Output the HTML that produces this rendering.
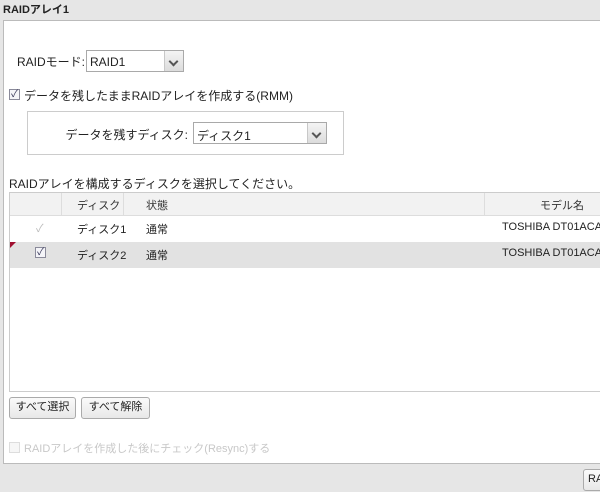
<!DOCTYPE html><html><head><meta charset="utf-8"><style>
body{margin:0;width:600px;height:492px;background:#e6e6e6;font-family:"Liberation Sans","Noto Sans CJK JP",sans-serif;font-size:11px;color:#222;position:relative;overflow:hidden}
.a{position:absolute;white-space:nowrap}
.sel{position:absolute;background:#fff;border:1px solid #a9a9a9;box-sizing:border-box}
.sel .ar{position:absolute;right:0;top:0;bottom:0;width:18px;background:linear-gradient(#f4f4f4,#dcdcdc);border-left:1px solid #c8c8c8}
.sel .ar:after{content:"";position:absolute;left:5px;top:7px;width:5px;height:5px;border-right:2px solid #555;border-bottom:2px solid #555;transform:rotate(45deg)}
.cb{position:absolute;width:11px;height:11px;border:1px solid #8a8a9a;background:#f4f4f8;box-sizing:border-box;font-size:10px;line-height:9px;text-align:center;color:#335}
.btn{position:absolute;border:1px solid #aaa;border-radius:3px;background:linear-gradient(#fafafa,#e8e8e8);box-sizing:border-box;text-align:center;line-height:19px}
</style></head><body>
<div class="a" style="left:3px;top:1px;font-weight:bold;font-size:11px">RAIDアレイ1</div>
<div class="a" style="left:3px;top:20px;width:620px;height:444px;background:#fff;border:1px solid #bbb;box-sizing:border-box"></div>
<div class="a" style="left:17px;top:53px;font-size:12px">RAIDモード:</div>
<div class="sel" style="left:86px;top:50px;width:98px;height:22px"><span class="a" style="left:3px;top:4px;font-size:12px">RAID1</span><div class="ar"></div></div>
<div class="cb" style="left:9px;top:89px">✓</div>
<div class="a" style="left:24px;top:87px;font-size:12px">データを残したままRAIDアレイを作成する(RMM)</div>
<div class="a" style="left:27px;top:111px;width:317px;height:44px;border:1px solid #ccc;box-sizing:border-box"></div>
<div class="a" style="right:412px;top:126px;font-size:12px">データを残すディスク:</div>
<div class="sel" style="left:193px;top:122px;width:134px;height:22px"><span class="a" style="left:3px;top:4px;font-size:12px">ディスク1</span><div class="ar"></div></div>
<div class="a" style="left:9px;top:175px;font-size:12px">RAIDアレイを構成するディスクを選択してください。</div>
<div class="a" style="left:9px;top:192px;width:600px;height:200px;border:1px solid #ccc;box-sizing:border-box"></div>
<div class="a" style="left:10px;top:193px;width:600px;height:22px;background:#f2f2f2;border-bottom:1px solid #ddd"></div>
<div class="a" style="left:61px;top:193px;width:1px;height:22px;background:#ddd"></div>
<div class="a" style="left:123px;top:193px;width:1px;height:22px;background:#ddd"></div>
<div class="a" style="left:484px;top:193px;width:1px;height:22px;background:#ddd"></div>
<div class="a" style="left:77px;top:197px;color:#333">ディスク</div>
<div class="a" style="left:146px;top:197px;color:#333">状態</div>
<div class="a" style="left:540px;top:197px;color:#333">モデル名</div>
<div class="a" style="left:10px;top:242px;width:600px;height:26px;background:#e2e2e2"></div>
<div class="a" style="left:10px;top:242px;width:0;height:0;border-top:6px solid #a01030;border-right:6px solid transparent"></div>
<div class="a" style="left:36px;top:220px;color:#bbb">✓</div>
<div class="cb" style="left:35px;top:247px">✓</div>
<div class="a" style="left:77px;top:221px">ディスク1</div>
<div class="a" style="left:146px;top:221px">通常</div>
<div class="a" style="left:502px;top:221px">TOSHIBA DT01ACA1</div>
<div class="a" style="left:77px;top:247px">ディスク2</div>
<div class="a" style="left:146px;top:247px">通常</div>
<div class="a" style="left:502px;top:247px">TOSHIBA DT01ACA1</div>
<div class="btn" style="left:9px;top:397px;width:67px;height:22px">すべて選択</div>
<div class="btn" style="left:81px;top:397px;width:69px;height:22px">すべて解除</div>
<div class="cb" style="left:9px;top:442px;border-color:#ddd;background:#f6f6f6"></div>
<div class="a" style="left:24px;top:440px;color:#c8c8c8">RAIDアレイを作成した後にチェック(Resync)する</div>
<div class="btn" style="left:583px;top:469px;width:40px;height:22px;text-align:left;padding-left:4px">RA</div>
</body></html>
